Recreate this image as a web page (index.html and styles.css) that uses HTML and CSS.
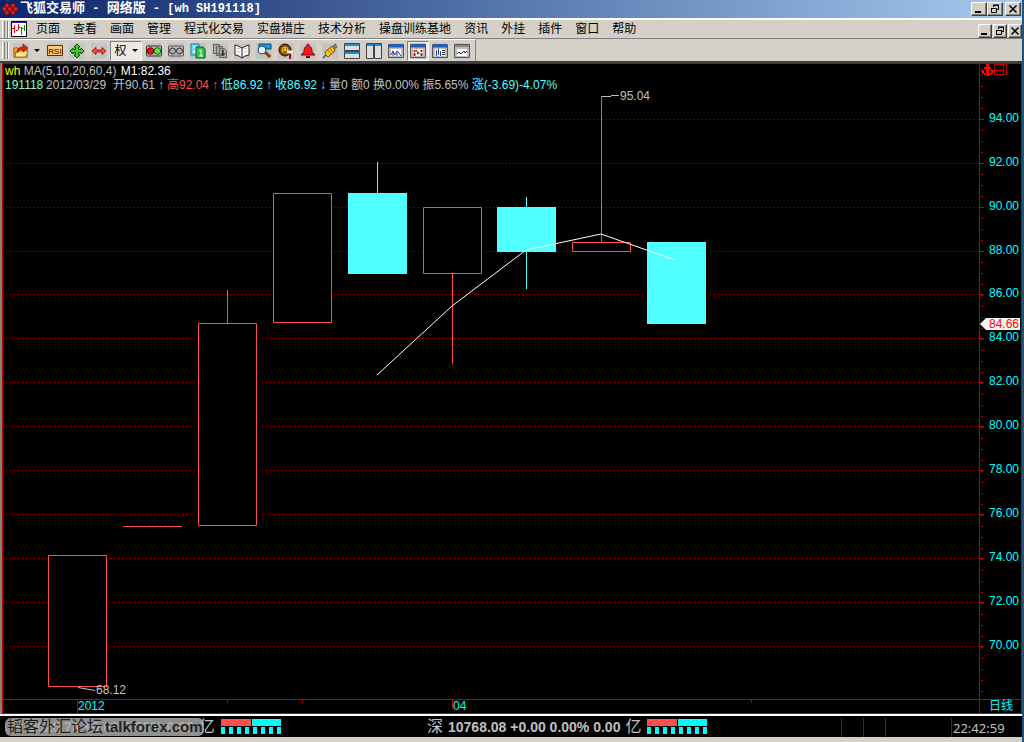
FILE: index.html
```html
<!DOCTYPE html>
<html lang="zh-CN">
<head>
<meta charset="utf-8">
<title>飞狐交易师 - 网络版 - [wh SH191118]</title>
<link rel="stylesheet" href="styles.css">
</head>
<body>
<header class="titlebar">
  <svg class="logo" width="16" height="14" viewBox="0 0 16 14"><g fill="#e02020" stroke="#500" stroke-width=".5"><circle cx="5" cy="3.500" r="2.300"/><circle cx="11" cy="3.500" r="2.300"/><circle cx="2.500" cy="7" r="2.300"/><circle cx="8" cy="7" r="2.300"/><circle cx="13.500" cy="7" r="2.300"/><circle cx="5" cy="10.500" r="2.300"/><circle cx="11" cy="10.500" r="2.300"/></g></svg>
  <h1 class="title"><span class="han">飞狐交易师</span> - <span class="han">网络版</span> - [wh SH191118]</h1>
  <div class="winbuttons">
    <button class="win" aria-label="最小化"><svg width="10" height="10" viewBox="0 0 10 10"><path d="M1 8h6" stroke="#000" stroke-width="2"/></svg></button>
    <button class="win" aria-label="还原"><svg width="10" height="10" viewBox="0 0 10 10"><path d="M3.500 3V1.500h5v4H7M3 1h6M1.500 4.500h5v4h-5zM1 4.500h6" fill="none" stroke="#000"/></svg></button>
    <button class="win win-close" aria-label="关闭"><svg width="10" height="10" viewBox="0 0 10 10"><path d="M1.500 1.500l7 7M8.500 1.500l-7 7" stroke="#000" stroke-width="1.500"/></svg></button>
  </div>
</header>

<nav class="menubar">
  <span class="grip"></span>
  <svg class="docicon" width="16" height="16" viewBox="0 0 16 16"><path fill="#fff" stroke="#000" d="M.5.5h15v15H.5z"/><path d="M1 1.500h14" stroke="#22a"/><path d="M3.500 4v8M1 7.500h2M7.500 3v6M5 9.500h2M7.500 6.500h2" stroke="#e00"/><path d="M10.500 6v8M10.500 7.500h2M13.500 4v6" stroke="#080"/></svg>
  <div class="menus">
    <button>页面</button><button>查看</button><button>画面</button><button>管理</button><button>程式化交易</button><button>实盘猎庄</button><button>技术分析</button><button>操盘训练基地</button><button>资讯</button><button>外挂</button><button>插件</button><button>窗口</button><button>帮助</button>
  </div>
  <div class="winbuttons docbuttons">
    <button class="win" aria-label="最小化文档"><svg width="10" height="10" viewBox="0 0 10 10"><path d="M1 8h6" stroke="#000" stroke-width="2"/></svg></button>
    <button class="win" aria-label="还原文档"><svg width="10" height="10" viewBox="0 0 10 10"><path d="M3.500 3V1.500h5v4H7M3 1h6M1.500 4.500h5v4h-5zM1 4.500h6" fill="none" stroke="#000"/></svg></button>
    <button class="win" aria-label="关闭文档"><svg width="10" height="10" viewBox="0 0 10 10"><path d="M1.500 1.500l7 7M8.500 1.500l-7 7" stroke="#000" stroke-width="1.500"/></svg></button>
  </div>
</nav>

<div class="toolbar">
  <div class="tools">
    <span class="grip"></span>
    <button class="tool tool-drop" aria-label="打开"><svg width="16" height="16" viewBox="0 0 16 16"><path d="M1 5h4l1 1h8v8H1z" fill="#f8b838" stroke="#a05000"/><path d="M3 8h12l-2 6H2z" fill="#ffe888" stroke="#b87010"/><path d="M4 10c0-5 3-6 6-6V1l5 4-5 4V6.500c-3 0-4 1-6 3.500z" fill="#e02010" stroke="#800" stroke-width=".6"/></svg><i class="caret"></i></button>
    <button class="tool" aria-label="RSI"><svg width="16" height="16" viewBox="0 0 16 16"><path d="M.5 2.500h15v10H.5z" fill="#ffc878" stroke="#603000"/><text x="8" y="11" class="rsi">RSI</text></svg></button>
    <button class="tool" aria-label="移动"><svg width="16" height="16" viewBox="0 0 16 16"><path d="M8 1l3 3H9.500v2.500H12V5l3 3-3 3V9.500H9.500V12H11l-3 3-3-3h1.500V9.500H4V11L1 8l3-3v1.500h2.500V4H5z" fill="#40d820" stroke="#084800"/></svg></button>
    <button class="tool" aria-label="水平缩放"><svg width="16" height="16" viewBox="0 0 16 16"><path d="M1 8l4-3.500V7h6V4.500L15 8l-4 3.500V9H5v2.500z" fill="#ff5040" stroke="#900" stroke-width=".8"/></svg></button>
    <button class="tool tool-right">权<i class="caret"></i></button>
    <button class="tool" aria-label="红绿灯"><svg width="16" height="16" viewBox="0 0 16 16"><rect x=".5" y="3" width="15" height="10" rx="1" fill="#bbb" stroke="#333"/><circle cx="4.500" cy="8" r="3.300" fill="#e81020" stroke="#600"/><circle cx="11.500" cy="8" r="3.300" fill="#70e020" stroke="#063"/></svg></button>
    <button class="tool" aria-label="灰灯"><svg width="16" height="16" viewBox="0 0 16 16"><rect x=".5" y="3" width="15" height="10" rx="1" fill="#bbb" stroke="#555"/><circle cx="4.500" cy="8" r="3" fill="#aaa" stroke="#333"/><circle cx="11.500" cy="8" r="3" fill="#aaa" stroke="#333"/></svg></button>
    <button class="tool" aria-label="页面切换"><svg width="16" height="16" viewBox="0 0 16 16"><path d="M1 1h8v11H1z" fill="#70d8f8" stroke="#1880b0"/><path d="M3 4h3v2L3 9h4" fill="none" stroke="#fff"/><path d="M6 4h7l2 2v9H6z" fill="#30c050" stroke="#086020"/><path d="M9 8l2-1v6M9 13h4" fill="none" stroke="#fff"/></svg></button>
    <button class="tool" aria-label="多页"><svg width="16" height="16" viewBox="0 0 16 16"><path d="M1.500 1.500h6v9h-6zM4.500 3.500h6v9h-6zM7.500 5.500h5l2 2v7h-7z" fill="#a8a8a8" stroke="#666"/><path d="M11 7v5M9 10.500l2 2 2-2" fill="none" stroke="#000"/></svg></button>
    <button class="tool" aria-label="说明书"><svg width="16" height="16" viewBox="0 0 16 16"><path d="M1 2l3 1 4 2 4-2 3-1v10l-4 1-3 2-3-2-4-1z" fill="#fff" stroke="#222"/><path d="M8 5v10" stroke="#222"/><path d="M3 5l3 1M3 8l3 1M10 6l3-1M10 9l3-1" stroke="#e8a0a0"/></svg></button>
    <button class="tool" aria-label="搜索"><svg width="16" height="16" viewBox="0 0 16 16"><path d="M3 1h12v5H3z" fill="#2098d8" stroke="#005080"/><path d="M9 9l5 5" stroke="#903808" stroke-width="3"/><circle cx="6" cy="7" r="4" fill="#d8f4ff" stroke="#246"/></svg></button>
    <button class="tool" aria-label="工具"><svg width="16" height="16" viewBox="0 0 16 16"><circle cx="7" cy="7" r="6" fill="#804008" stroke="#301000"/><circle cx="7" cy="7" r="3.500" fill="#e8b820"/><path d="M5 6h1M8 6h1M5 9h4" stroke="#402000"/><path d="M12 9v7" stroke="#a00818" stroke-width="2"/><path d="M9 9h6" stroke="#eee" stroke-width="3"/></svg></button>
    <button class="tool" aria-label="预警"><svg width="16" height="16" viewBox="0 0 16 16"><path d="M8 1c-1 0-1 1-1 2-3 1-3 4-3 6l-3 3h14l-3-3c0-2 0-5-3-6 0-1 0-2-1-2z" fill="#f81818" stroke="#800"/><path d="M6 14h4" stroke="#800" stroke-width="2"/></svg></button>
    <button class="tool" aria-label="连接"><svg width="16" height="16" viewBox="0 0 16 16"><path d="M1 15l4-4M10 5l4-4M12 6l3-3" stroke="#555" stroke-width="1.500"/><path d="M4 8l6-5 3 4-1 2-6 5-3-3z" fill="#f8c820" stroke="#805000"/><path d="M6 7l3 4M8 5l3 4" stroke="#a07000"/></svg></button>
    <button class="tool" aria-label="横向平铺"><svg width="16" height="16" viewBox="0 0 16 16"><path d="M.5.5h15v7H.5zM.5 8.500h15v7H.5z" fill="#ddd" stroke="#444"/><path d="M1 2h14M1 10h14" stroke="#1890d8" stroke-width="2"/></svg></button>
    <button class="tool" aria-label="纵向平铺"><svg width="16" height="16" viewBox="0 0 16 16"><path d="M.5.5h7v15h-7zM8.500.5h7v15h-7z" fill="#ddd" stroke="#444"/><path d="M1 2h6M9 2h6" stroke="#1890d8" stroke-width="2"/></svg></button>
    <button class="tool" aria-label="分时"><svg width="16" height="16" viewBox="0 0 16 16"><path d="M.5 1.500h15v13H.5z" fill="#bbb" stroke="#555"/><path d="M1 3h14" stroke="#1860d0" stroke-width="3"/><path fill="#fff" d="M3 6h10v7H3z"/><path d="M3 12l2-4 2 4 2-4 2 2 2 3M5 8v5M9 8v5" fill="none" stroke="#2040b0"/></svg></button>
    <button class="tool tool-on" aria-label="K线"><svg width="16" height="16" viewBox="0 0 16 16"><path d="M.5 1.500h15v13H.5z" fill="#bbb" stroke="#555"/><path d="M1 3h14" stroke="#1860d0" stroke-width="3"/><path fill="#fff" d="M3 6h10v7H3z"/><path d="M4.500 7v2M4.500 10v3M6 7.500h1M11.500 7v2M11.500 10v3" stroke="#e00" stroke-width="2"/><path d="M7 8l3 2-3 2z" fill="#080"/></svg></button>
    <button class="tool" aria-label="报价"><svg width="16" height="16" viewBox="0 0 16 16"><path d="M.5 1.500h15v13H.5z" fill="#bbb" stroke="#555"/><path d="M1 3h14" stroke="#1860d0" stroke-width="3"/><path fill="#fff" d="M3 6h10v7H3z"/><path d="M4.500 7v6M6.500 6v6M8.500 8v5" stroke="#2040b0"/><path d="M10 7.500h3M10 9.500h3M10 11.500h3" stroke="#222"/></svg></button>
    <button class="tool" aria-label="走势"><svg width="16" height="16" viewBox="0 0 16 16"><path d="M.5 1.500h15v13H.5z" fill="#bbb" stroke="#555"/><path d="M1 3h14" stroke="#888" stroke-width="2"/><path fill="#fff" d="M3 6h10v7H3z"/><path d="M3 11l2-2 2 2 3-3 1 2 2-2" fill="none" stroke="#222"/></svg></button>
  </div>
</div>

<main class="panel">
  <section class="plot">
    <svg class="fill" viewBox="3 64 976 635" preserveAspectRatio="xMinYMin">
      <path class="grid" d="M6 119.500H979M6 163.500H979M6 207.500H979M6 251.500H979M6 294.500H979M6 338.500H979M6 382.500H979M6 426.500H979M6 470.500H979M6 514.500H979M6 558.500H979M6 602.500H979M6 646.500H979"/>
      <path class="mask" d="M47 555h63v132H47zM197 323h62v202h-62zM272 193h62v130h-62zM347 193h62v81h-62zM422 207h62v67h-62zM496 207h62v45h-62zM571 242h62v10h-62zM646 242h62v82h-62z"/>
      <path class="up" d="M48.500 555.500h58v131h-58zM123 526.500h59M198.500 323.500h58v202h-58zM227.500 290v33M273.500 193.500h58v129h-58zM423.500 207.500h58v66h-58zM452.500 274v90M572.500 242.500h58v9h-58zM601.500 96v146"/>
      <path class="down" d="M348 193h59v81h-59zM377 162h1v31h-1zM497 207h59v45h-59zM526 197h1v92h-1zM647 242h59v82h-59z"/>
      <path class="ma" d="M377 375l75-69 74-56 75-16 74 26"/>
      <path class="leader" d="M602 96.500h9M611 95.500h8M78 687.500l17 3"/>
      <text class="note" x="620" y="100">95.04</text>
      <text class="note" x="96" y="694">68.12</text>
    </svg>
    <div class="info">
      <p><span class="yellow">wh</span> <span class="indicator">MA(5,10,20,60,4)</span> <span class="white">M1:82.36</span></p>
      <p class="quote"><span class="code">191118</span><span class="date">2012/03/29</span><span class="ohlc">开90.61<b>↑</b></span><span class="ohlc red">高92.04<b>↑</b></span><span class="ohlc cyan">低86.92<b>↑</b></span><span class="ohlc cyan">收86.92<b>↓</b></span><span>量0 额0 换0.00% 振5.65% <span class="cyan">涨(-3.69)-4.07%</span></span></p>
    </div>
  </section>
  <aside class="axis">
    <svg class="fill" viewBox="980 64 41 635" preserveAspectRatio="xMinYMin">
      <path d="M986 64h3v3h2v2h-2v4h2v-2h-1l2-2 2 2v1h-1v2h-2v1h-2v1h-3v-1h-2v-1h-2v-2h-1v-1l2-2 2 2h-1v2h2v-4h-2v-2h2z" fill="#f00"/>
      <path d="M994.500 64.500h12v10h-12zM1003.500 64v10M994 70.500h9" fill="none" stroke="#c00000"/>
      <path class="minor" d="M982 75v624"/>
      <path class="major" d="M980 119.500h4M980 163.500h4M980 207.500h4M980 251.500h4M980 294.500h4M980 338.500h4M980 382.500h4M980 426.500h4M980 470.500h4M980 514.500h4M980 558.500h4M980 602.500h4M980 646.500h4"/>
      <g class="scale"><text x="989" y="122">94.00</text><text x="989" y="166">92.00</text><text x="989" y="210">90.00</text><text x="989" y="254">88.00</text><text x="989" y="297">86.00</text><text x="989" y="341">84.00</text><text x="989" y="385">82.00</text><text x="989" y="429">80.00</text><text x="989" y="473">78.00</text><text x="989" y="517">76.00</text><text x="989" y="561">74.00</text><text x="989" y="605">72.00</text><text x="989" y="649">70.00</text></g>
      <path d="M980 324l6-6h34v12h-34z" fill="#f0f8f0"/>
      <text class="last" x="989" y="328">84.66</text>
    </svg>
  </aside>
  <div class="dates">
    <svg class="fill" viewBox="3 700 976 13" preserveAspectRatio="xMinYMin">
      <path d="M77.500 700v13M227.500 700v3M302.500 700v3M452.500 700v9M751.500 700v3" stroke="#c00000"/>
      <g class="scale"><text x="78" y="710">2012</text><text x="453" y="710">04</text></g>
    </svg>
  </div>
  <div class="period">日线</div>
</main>

<footer class="status">
  <div class="market market-sh">
    <span class="index"><span class="name">沪</span><span>2020.78 +0.00 0.00% 0.00</span><span class="name">亿</span></span>
    <span class="meter"><i></i></span>
    <span class="watermark">韬客外汇论坛<b>talkforex.com</b></span>
  </div>
  <div class="market">
    <span class="index"><span class="name">深</span><span>10768.08 +0.00 0.00% 0.00</span><span class="name">亿</span></span>
    <span class="meter"><i></i></span>
  </div>
  <div class="cells"><span></span><span></span><span class="wide"></span><time>22:42:59</time></div>
</footer>
</body>
</html>
```

FILE: styles.css
```css
* { box-sizing: border-box; }
body {
  margin: 0;
  height: 100vh;
  display: flex;
  flex-direction: column;
  overflow: hidden;
  background: #d4d0c8;
  border-right: 2px solid #20557a;
  font: 12px/14px "Liberation Sans", "Noto Sans CJK SC", sans-serif;
  color: #000;
}
button {
  margin: 0;
  padding: 0;
  border: 0;
  background: none;
  font: inherit;
  color: inherit;
}
svg { display: block; flex: none; }
p { margin: 0; }

.titlebar {
  flex: none;
  height: 18px;
  display: flex;
  align-items: center;
  gap: 2px;
  padding: 0 1px 0 2px;
  background: linear-gradient(90deg, #0a246a, #a6caf0);
}
.title {
  flex: 1;
  margin: 0;
  color: #fff;
  font: bold 12px/16px "Liberation Mono", "Noto Sans CJK SC", monospace;
  white-space: pre;
}
.han { font-size: 13px; }
.winbuttons { display: flex; }
.win {
  width: 16px;
  height: 14px;
  display: flex;
  align-items: center;
  justify-content: center;
  background: #d4d0c8;
  border: 1px solid;
  border-color: #fff #404040 #404040 #fff;
  box-shadow: inset -1px -1px #808080;
}
.win-close { margin-left: 2px; }
.docbuttons { gap: 1px; align-self: flex-end; margin-left: auto; }
.docbuttons .win { width: 14px; }

.menubar {
  flex: none;
  height: 21px;
  display: flex;
  align-items: center;
  padding-left: 2px;
  border-top: 2px solid #fff;
  border-bottom: 1px solid #808080;
}
.grip {
  flex: none;
  width: 7px;
  height: 17px;
  border: solid #fff;
  border-width: 0 1px;
  background: linear-gradient(90deg, transparent 1px, #808080 1px, #808080 2px, transparent 2px, transparent 4px, #808080 4px);
}
.docicon { margin: 0 2px; }
.menus { display: flex; }
.menus button { padding: 0 6px 0 7px; white-space: nowrap; }

.toolbar {
  flex: none;
  height: 24px;
  display: flex;
  border-bottom: 2px solid #404040;
}
.tools {
  display: flex;
  align-items: center;
  padding: 0 2px;
  border-top: 1px solid #fff;
  border-right: 1px solid #808080;
}
.tool {
  width: 22px;
  height: 20px;
  display: flex;
  align-items: center;
  justify-content: center;
}
.tool svg { background: #c4c4c4; }
.tool-drop { width: 35px; gap: 5px; }
.tool-right { width: 32px; gap: 5px; margin-right: 1px; }
.tool-right, .tool-on {
  background: #ece9e4;
  border: 1px solid;
  border-color: #808080 #fff #fff #808080;
}
.caret {
  border: 3px solid transparent;
  border-top-color: #000;
  border-bottom: 0;
}
.rsi { font: 8px "Liberation Sans", sans-serif; text-anchor: middle; }

.panel {
  flex: 1;
  min-height: 0;
  display: grid;
  grid-template: minmax(0, 1fr) 14px / minmax(0, 1fr) 42px;
  margin-left: 2px;
  background: #000;
  border: 1px solid #c00000;
  box-shadow: -2px 0 #808080;
  color: #c0c0c0;
}
.plot { position: relative; overflow: hidden; }
.axis { border-left: 1px solid #c00000; min-height: 0; }
.dates { border-top: 1px solid #c00000; }
.period {
  border: solid #c00000;
  border-width: 1px 0 0 1px;
  padding-left: 9px;
  color: #00ffff;
  line-height: 13px;
}
.fill { width: 100%; height: 100%; }
.grid { stroke: #c00000; stroke-dasharray: 1 3; }
.mask { fill: #000; }
.up { fill: none; stroke: #ff5050; }
.down { fill: #50ffff; }
.ma { fill: none; stroke: #fff; }
.leader { fill: none; stroke: #c0c0c0; }
.note { fill: #c0c0c0; }
.minor { stroke: #c00000; stroke-width: 2px; stroke-dasharray: 1 10; }
.major { stroke: #c00000; }
.scale { fill: #00ffff; }
.last { fill: #ff0000; }
.info { position: absolute; top: 0; left: 2px; white-space: nowrap; }
.quote { display: flex; }
.code { width: 41px; color: #80ffc0; }
.date { width: 67px; }
.ohlc { width: 54px; }
.ohlc b { display: inline-block; width: 12px; text-align: center; font-weight: normal; }
.yellow { color: #ffff00; }
.white { color: #fff; }
.red { color: #ff5050; }
.cyan { color: #50ffff; }
.indicator { margin-right: 1px; }

.status {
  flex: none;
  height: 28px;
  display: flex;
  background: #000;
  border-top: 2px solid #fff;
  border-bottom: 5px solid #d4d0c8;
  color: #c0c0c0;
}
.market { position: relative; display: flex; align-items: center; gap: 6px; }
.market-sh { width: 427px; padding-left: 8px; }
.index {
  display: flex;
  gap: 5px;
  font-size: 14px;
  font-weight: bold;
  line-height: 20px;
  white-space: nowrap;
}
.name { font-size: 16px; font-weight: normal; }
.meter {
  width: 60px;
  height: 15px;
  background: linear-gradient(90deg, #ff5050 30px, #000 30px, #000 31px, #00ffff 31px);
  padding-top: 7px;
}
.meter i {
  display: block;
  height: 8px;
  border-top: 1px solid #000;
  background: repeating-linear-gradient(90deg, #00ffff 0, #00ffff 4px, #000 4px, #000 8px);
}
.watermark {
  position: absolute;
  left: 5px;
  top: 2px;
  width: 199px;
  display: flex;
  gap: 2px;
  padding-left: 2px;
  border-radius: 6px;
  background: rgba(168, 168, 168, .85);
  color: #222;
  font-size: 16px;
  line-height: 18px;
  white-space: nowrap;
}
.watermark b { font-size: 15px; }
.cells { display: flex; margin-left: auto; padding-top: 2px; }
.cells span { width: 22px; border-left: 1px solid #a00000; }
.cells .wide { width: 66px; }
.cells time {
  width: 71px;
  padding-left: 1px;
  border-left: 1px solid #a00000;
  font: 13px/20px "Noto Sans", sans-serif;
}
```
